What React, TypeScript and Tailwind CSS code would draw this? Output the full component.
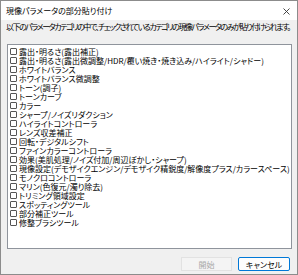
import React from "react";

const items = [
  "露出・明るさ(露出補正)",
  "露出・明るさ(露出微調整/HDR/覆い焼き・焼き込み/ハイライト/シャドー)",
  "ホワイトバランス",
  "ホワイトバランス微調整",
  "トーン(調子)",
  "トーンカーブ",
  "カラー",
  "シャープ/ノイズリダクション",
  "ハイライトコントローラ",
  "レンズ収差補正",
  "回転・デジタルシフト",
  "ファインカラーコントローラ",
  "効果(美肌処理/ノイズ付加/周辺ぼかし・シャープ)",
  "現像設定(デモザイクエンジン/デモザイク精鋭度/解像度プラス/カラースペース)",
  "モノクロコントローラ",
  "マリン(色復元/濁り除去)",
  "トリミング領域設定",
  "スポッティングツール",
  "部分補正ツール",
  "修整ブラシツール",
];

export default function App() {
  return (
    <div
      className="w-[298px] h-[275px] border border-[#8c8c8c] bg-[#f0f0f0] flex flex-col text-black text-[8px] leading-[9px] [font-feature-settings:'palt'] overflow-hidden"
      style={{ fontFamily: '"Noto Sans CJK JP", "Noto Sans", sans-serif' }}
    >
      <div className="h-[19px] bg-white flex items-center justify-between pl-[5px] pr-[7px] shrink-0">
        <span>現像パラメータの部分貼り付け</span>
        <svg width="7" height="7" viewBox="0 0 7 7" className="mt-[1px]">
          <path d="M0.5 0.5 L6.5 6.5 M6.5 0.5 L0.5 6.5" stroke="#333" strokeWidth="0.9" />
        </svg>
      </div>
      <div className="pl-[5px] mt-[2px] h-[10px] whitespace-nowrap tracking-[-1.45px]">
        以下のパラメータカテゴリの中で、チェックされているカテゴリの現像パラメータのみが貼り付けられます。
      </div>
      <div className="ml-[6px] mr-[5px] mt-[12px] h-[205px] border border-[#8f949c] bg-white pt-[2px] shrink-0">
        {items.map((t) => (
          <div key={t} className="h-[9px] flex items-center whitespace-nowrap">
            <span className="ml-[2px] w-[7px] h-[7px] border border-[#555] rounded-[1px] bg-white shrink-0" />
            <span className="ml-[2px] block h-[9px] leading-[9px]">{t}</span>
          </div>
        ))}
      </div>
      <div className="flex justify-end gap-[6px] pr-[7px] mt-[8px]">
        <div className="w-[51px] h-[14px] bg-[#f4f4f4] border border-[#e2e2e2] text-[#a8a8a8] flex items-center justify-center">
          開始
        </div>
        <div className="w-[52px] h-[14px] bg-[#fdfdfd] border border-[#0078d7] rounded-[2px] flex items-center justify-center">
          キャンセル
        </div>
      </div>
    </div>
  );
}
